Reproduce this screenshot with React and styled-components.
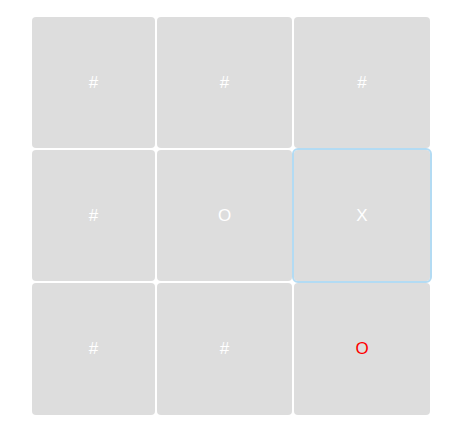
import React from "react";
import styled, { createGlobalStyle } from "styled-components";

const GlobalStyle = createGlobalStyle`
  html, body { margin: 0; padding: 0; background: #ffffff; }
  body { font-family: "Liberation Sans", Arial, sans-serif; }
`;

const Page = styled.div`
  padding: 17px 0 0 32px;
`;

const Board = styled.div`
  display: grid;
  grid-template-columns: 123px 135px 136px;
  grid-template-rows: 131px 131px 132px;
  gap: 2px;
`;

const Cell = styled.div`
  display: flex;
  align-items: center;
  justify-content: center;
  background: #dddddd;
  border-radius: 4px;
  color: ${(p) => (p.$red ? "#ff0000" : "#ffffff")};
  font-size: 17px;
  outline: ${(p) => (p.$active ? "2px solid #b3dbf3" : "none")};
  position: relative;
  z-index: ${(p) => (p.$active ? 1 : 0)};
`;

const cells = [
  { v: "#" }, { v: "#" }, { v: "#" },
  { v: "#" }, { v: "O" }, { v: "X", active: true },
  { v: "#" }, { v: "#" }, { v: "O", red: true },
];

export default function App() {
  return (
    <>
      <GlobalStyle />
      <Page>
        <Board>
          {cells.map((c, i) => (
            <Cell key={i} $active={c.active} $red={c.red}>
              {c.v}
            </Cell>
          ))}
        </Board>
      </Page>
    </>
  );
}
